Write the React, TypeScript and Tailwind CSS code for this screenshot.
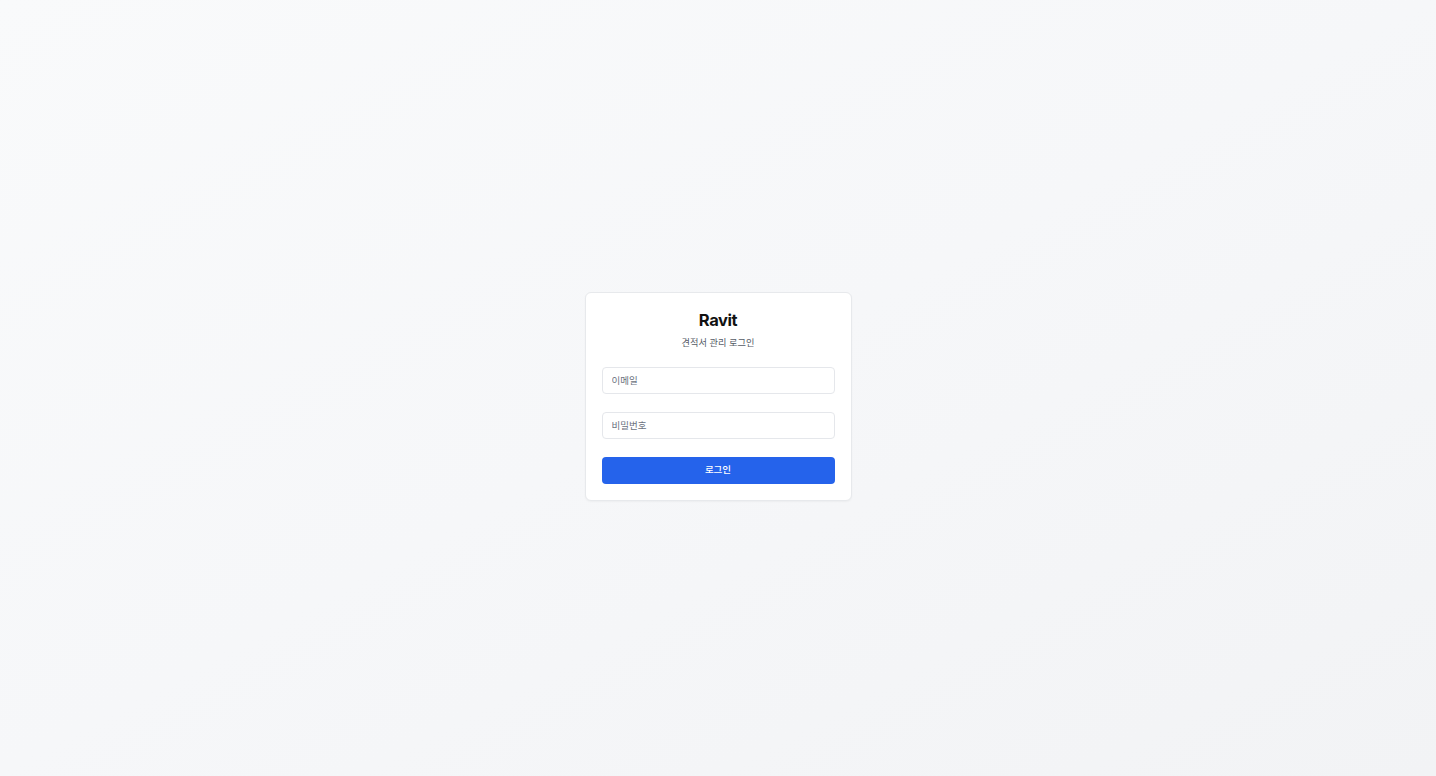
import React, { useState } from 'react';

const font = { fontFamily: 'Inter, "Noto Sans CJK KR", "Noto Sans", sans-serif' };

export default function App() {
  const [email, setEmail] = useState('');
  const [password, setPassword] = useState('');

  return (
    <div
      className="min-h-screen w-full flex items-center justify-center pt-4 bg-gradient-to-br from-[#f9fafb] via-[#f6f7f9] to-[#f2f3f5]"
      style={font}
    >
      <div className="w-[267px] bg-white border border-[#e7e9ec] rounded-[6px] shadow-[0_1px_2px_rgba(0,0,0,0.04)] p-4">
        {/* Header */}
        <div className="text-center">
          <h1 className="text-[16.5px] leading-[22px] font-bold text-[#111111] tracking-tight">Ravit</h1>
          <p className="mt-[5px] text-[9.2px] leading-[14px] text-[#555b66]">견적서 관리 로그인</p>
        </div>

        {/* Form */}
        <form className="mt-[17px] flex flex-col gap-[18px]" onSubmit={(e) => e.preventDefault()}>
          <input
            type="email"
            value={email}
            onChange={(e) => setEmail(e.target.value)}
            placeholder="이메일"
            className="w-full h-[27px] px-[9px] text-[9.5px] text-gray-800 placeholder:text-[#6b7280] bg-white border border-[#e5e7eb] rounded-[4px] outline-none"
          />
          <input
            type="password"
            value={password}
            onChange={(e) => setPassword(e.target.value)}
            placeholder="비밀번호"
            className="w-full h-[27px] px-[9px] text-[9.5px] text-gray-800 placeholder:text-[#6b7280] bg-white border border-[#e5e7eb] rounded-[4px] outline-none"
          />
          <button
            type="submit"
            className="w-full h-[27px] bg-[#2563eb] text-white text-[9.5px] font-medium rounded-[4px]"
          >
            로그인
          </button>
        </form>
      </div>
    </div>
  );
}
